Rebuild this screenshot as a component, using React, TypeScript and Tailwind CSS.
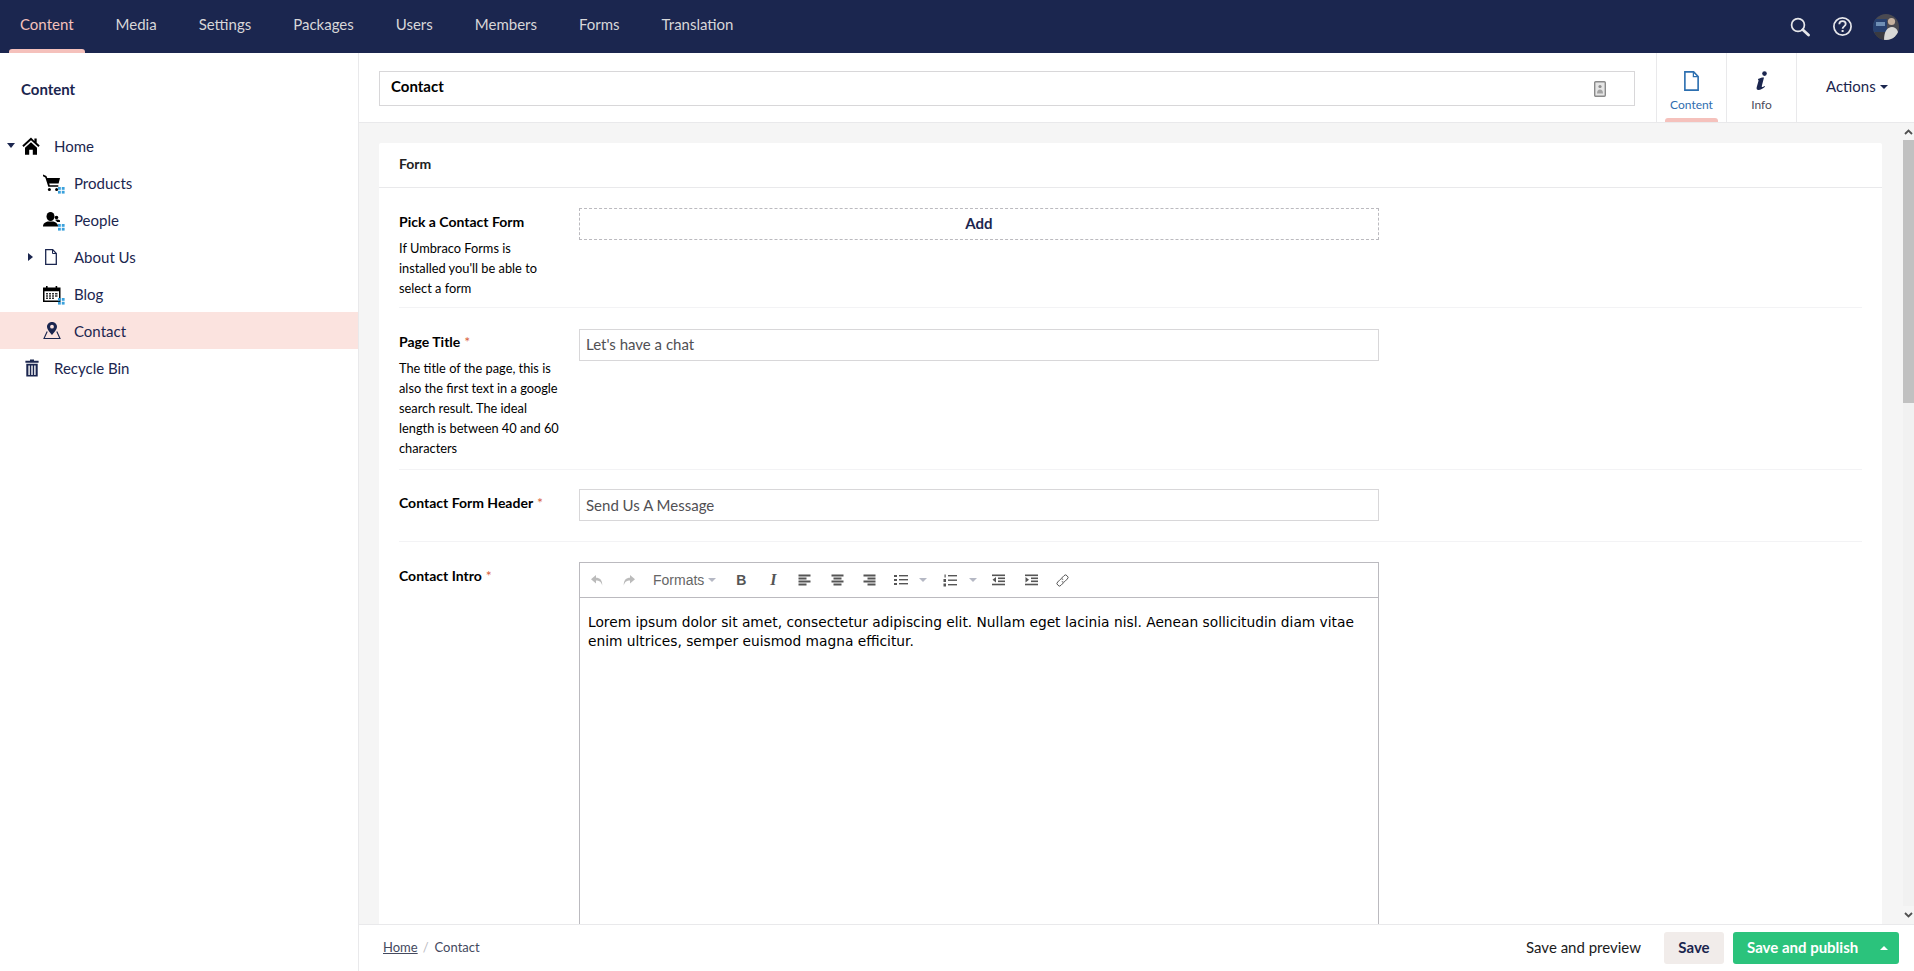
import React from "react";

const lato = "font-['Lato',sans-serif]";

function Dots() {
  return (
    <svg className="absolute left-[16px] top-[13px]" width="7" height="7" viewBox="0 0 7 7">
      <g fill="#3aa1dc">
        <rect x="0" y="0" width="2.800" height="2.800" />
        <rect x="3.800" y="0" width="2.800" height="2.800" />
        <rect x="0" y="3.800" width="2.800" height="2.800" />
        <rect x="3.800" y="3.800" width="2.800" height="2.800" />
      </g>
    </svg>
  );
}

function HomeIcon() {
  return (
    <svg width="18" height="18" viewBox="0 0 18 18">
      <path d="M9 .5.3 8.600l1.300 1.400L9 3.200l7.400 6.800 1.300-1.400-3-2.800V1.500h-2.300v2.400z" fill="#000" />
      <path d="M3 10.800 9 5.300l6 5.500v6.900h-4.200v-5H7.200v5H3z" fill="#000" />
    </svg>
  );
}
function CartIcon() {
  return (
    <svg width="17" height="18" viewBox="0 0 17 18">
      <path d="M0 .5 3.400 2l.8 2H17l-1.400 5.600H6.200l.5 1.600h8.600v1.600H5.300L2.300 3.400 0 2.200z" fill="#000" />
      <circle cx="6.400" cy="15.400" r="1.500" fill="#000" />
      <circle cx="13.600" cy="15.400" r="1.500" fill="#000" />
    </svg>
  );
}
function PeopleIcon() {
  return (
    <svg width="18" height="18" viewBox="0 0 18 18">
      <ellipse cx="7.500" cy="5.500" rx="4" ry="4.500" fill="#000" />
      <path d="M0 14.500c.5-2.600 3-3.600 4.500-4h6c1.600.5 4 1.500 4.500 4v1H0z" fill="#000" />
      <circle cx="13.500" cy="6.500" r="1.800" fill="#000" />
      <path d="M13 8.500c2 0 3.500.4 4 1v1.400h-3c-.3-.8-1-1.400-2-1.800z" fill="#000" />
    </svg>
  );
}
function DocIcon({ color = "#1b264f", w = 12, h = 16 }: { color?: string; w?: number; h?: number }) {
  return (
    <svg width={w} height={h} viewBox="0 0 12 16">
      <path d="M.7.7h7l3.600 3.700v10.900H.7z" fill="none" stroke={color} strokeWidth="1.300" />
      <path d="M7.500.9v3.600h3.600" fill="none" stroke={color} strokeWidth="1" />
    </svg>
  );
}
function CalendarIcon() {
  return (
    <svg width="18" height="18" viewBox="0 0 18 18">
      <path d="M0 2.500h3V1h1.600v1.500h8V1h1.600v1.500H17.500V17H0zM1.500 6.200v9.300H16V6.200z" fill="#000" fillRule="evenodd" />
      <path d="M3 8h11.500v1.400H3zM3 10.300h11.500v1.400H3zM3 12.600h8v1.400H3z" fill="#333" />
      <path d="M5 7.500h1v7H5zM8 7.500h1v7H8zM11 7.500h1v7h-1z" fill="#fff" />
    </svg>
  );
}
function MapIcon() {
  return (
    <svg width="18" height="18" viewBox="0 0 18 18">
      <path d="M9 0C6 0 4 2.200 4 4.800 4 7.600 7.400 11 9 13c1.600-2 5-5.400 5-8.200C14 2.200 12 0 9 0zm0 6.600A1.900 1.900 0 1 1 9 2.800a1.900 1.900 0 0 1 0 3.800z" fill="#1b264f" />
      <path d="M4.200 9.500 1 16.500h16l-3.200-7" fill="none" stroke="#1b264f" strokeWidth="1.100" />
    </svg>
  );
}
function TrashIcon() {
  return (
    <svg width="14" height="18" viewBox="0 0 14 18">
      <path d="M5 .5h4v1.200h4.600v2.100H.4V1.700H5z" fill="#1b264f" />
      <path d="M1.300 4.800h11.400V17.500H1.300zM3.400 6.500v9.400h1.400V6.500zM6.300 6.500v9.400h1.400V6.500zM9.200 6.500v9.400h1.400V6.500z" fill="#1b264f" fillRule="evenodd" />
    </svg>
  );
}

function TreeRow({
  depth,
  label,
  icon,
  caret,
  dots,
  active,
  iconClass = "",
}: {
  depth: 0 | 1;
  label: string;
  icon: React.ReactNode;
  caret?: "down" | "right";
  dots?: boolean;
  active?: boolean;
  iconClass?: string;
}) {
  return (
    <div className={`relative flex h-[37px] items-center ${depth === 0 ? "pl-[22px]" : "pl-[42px]"} ${active ? "bg-[#fbe3df]" : ""}`}>
      {caret === "down" && (
        <span className="absolute left-[7px] top-[16px] h-0 w-0 border-x-[4px] border-t-[5px] border-x-transparent border-t-[#1b264f]" />
      )}
      {caret === "right" && (
        <span className="absolute left-[28px] top-[15px] h-0 w-0 border-y-[4px] border-l-[5px] border-y-transparent border-l-[#1b264f]" />
      )}
      <span className={`relative flex h-[18px] w-[32px] shrink-0 items-center justify-start ${iconClass}`}>
        {icon}
        {dots && <Dots />}
      </span>
      <span className="pt-[1px] text-[15px] text-[#1b264f]">{label}</span>
    </div>
  );
}

function NavItem({ label, active }: { label: string; active?: boolean }) {
  return (
    <div className={`relative flex h-full items-center pb-[5px] ${active ? "pl-[20px] pr-[21px] text-[#f5c1bc]" : "px-[21px] text-[#d8d7d9]"} text-[15px]`}>
      {label}
      {active && <span className="absolute bottom-0 left-[9px] right-[10px] h-[4px] rounded-t-[3px] bg-[#f5c1bc]" />}
    </div>
  );
}

function Field({
  label,
  required,
  desc,
  children,
  className,
  labelClass,
  last,
}: {
  label: string;
  required?: boolean;
  desc?: string[];
  children: React.ReactNode;
  className: string;
  labelClass: string;
  last?: boolean;
}) {
  return (
    <div className={`flex ${last ? "" : "border-b border-[#f3f3f5]"} ${className}`}>
      <div className={`w-[180px] shrink-0 whitespace-nowrap ${labelClass}`}>
        <div className="text-[14px] font-bold leading-[20px] text-[#000]">
          {label}
          {required && <span className="ml-[4px] font-normal text-[#d9633f]">*</span>}
        </div>
        {desc && (
          <div className="mt-[6px] text-[12.8px] leading-[20px] text-[#000]">
            {desc.map((d) => (
              <div key={d}>{d}</div>
            ))}
          </div>
        )}
      </div>
      <div className="w-[800px] shrink-0">{children}</div>
    </div>
  );
}

const Tb = ({ children, className = "" }: { children: React.ReactNode; className?: string }) => (
  <span className={`flex items-center justify-center ${className}`}>{children}</span>
);

function Bars({ kind }: { kind: "l" | "c" | "r" }) {
  const rows = [0, 3, 6, 9];
  const widths = [12, 8, 12, 8];
  return (
    <svg width="13" height="12" viewBox="0 0 13 12">
      {rows.map((y, i) => {
        const w = widths[i];
        const x = kind === "l" ? 0.5 : kind === "r" ? 12.5 - w : 6.5 - w / 2;
        return <rect key={y} x={x} y={y + 0.5} width={w} height={2} fill="#555" />;
      })}
    </svg>
  );
}

function SmallCaret({ className = "" }: { className?: string }) {
  return <span className={`block h-0 w-0 border-x-[4px] border-t-[4px] border-x-transparent border-t-[#b5b8c4] ${className}`} />;
}

function Toolbar() {
  return (
    <div className="flex h-[35px] items-center border-b border-[#bbbabf] pl-[11px]">
      <Tb className="w-[12px]">
        <svg width="12" height="11" viewBox="0 0 12 11"><path d="M5 0 0 4.200 5 8.400V5.600c3 0 5 1 6.200 4.800C11.500 5.200 8.800 2.800 5 2.800z" fill="#bbb" /></svg>
      </Tb>
      <Tb className="ml-[20px] w-[12px]">
        <svg width="12" height="11" viewBox="0 0 12 11"><path d="M7 0l5 4.200L7 8.400V5.600c-3 0-5 1-6.200 4.800C.5 5.200 3.200 2.800 7 2.800z" fill="#bbb" /></svg>
      </Tb>
      <span className="ml-[18px] font-['Liberation_Sans',sans-serif] text-[14px] text-[#666]">Formats</span>
      <SmallCaret className="ml-[4px]" />
      <Tb className="ml-[19px] w-[12px]"><span className="font-['Liberation_Sans',sans-serif] text-[14px] font-bold text-[#555]">B</span></Tb>
      <Tb className="ml-[20px] w-[12px]"><span className="font-['Liberation_Serif',serif] text-[16px] font-bold italic text-[#555]">I</span></Tb>
      <Tb className="ml-[18px] w-[14px]"><Bars kind="l" /></Tb>
      <Tb className="ml-[19px] w-[14px]"><Bars kind="c" /></Tb>
      <Tb className="ml-[18px] w-[14px]"><Bars kind="r" /></Tb>
      <Tb className="ml-[18px] w-[14px]">
        <svg width="14" height="12" viewBox="0 0 14 12">
          <g fill="#555">
            <rect x="0" y="1" width="3" height="2" /><rect x="0" y="5" width="3" height="2" /><rect x="0" y="9" width="3" height="2" />
            <rect x="5" y="1" width="9" height="1.400" /><rect x="5" y="5" width="9" height="1.400" /><rect x="5" y="9" width="9" height="1.400" />
          </g>
        </svg>
      </Tb>
      <SmallCaret className="ml-[11px]" />
      <Tb className="ml-[16px] w-[14px]">
        <svg width="14" height="13" viewBox="0 0 14 13">
          <g fill="#555">
            <rect x="1.500" y="0.500" width="1.200" height="3" /><rect x="0.500" y="5" width="2.500" height="3" /><rect x="0.500" y="9.500" width="2.500" height="3" />
            <rect x="5" y="1" width="9" height="1.400" /><rect x="5" y="5.500" width="9" height="1.400" /><rect x="5" y="10" width="9" height="1.400" />
          </g>
        </svg>
      </Tb>
      <SmallCaret className="ml-[12px]" />
      <Tb className="ml-[14px] w-[14px]">
        <svg width="13" height="12" viewBox="0 0 13 12">
          <g fill="#555">
            <rect x="0" y="0.500" width="13" height="1.600" /><rect x="6" y="3.500" width="7" height="1.600" /><rect x="6" y="6.500" width="7" height="1.600" /><rect x="0" y="9.700" width="13" height="1.600" />
            <path d="M4 3v5.500L.5 5.700z" />
          </g>
        </svg>
      </Tb>
      <Tb className="ml-[19px] w-[14px]">
        <svg width="13" height="12" viewBox="0 0 13 12">
          <g fill="#555">
            <rect x="0" y="0.500" width="13" height="1.600" /><rect x="6" y="3.500" width="7" height="1.600" /><rect x="6" y="6.500" width="7" height="1.600" /><rect x="0" y="9.700" width="13" height="1.600" />
            <path d="M.5 3v5.500L4 5.700z" />
          </g>
        </svg>
      </Tb>
      <Tb className="ml-[17px] w-[14px]">
        <svg width="13" height="13" viewBox="0 0 13 13" fill="none" stroke="#555" strokeWidth="1">
          <path d="M5.500 4.200 8 1.700a2 2 0 0 1 3 0l.3.3a2 2 0 0 1 0 3L8.800 7.500a2 2 0 0 1-3 0" />
          <path d="M7.500 8.800 5 11.300a2 2 0 0 1-3 0l-.3-.3a2 2 0 0 1 0-3l2.500-2.500a2 2 0 0 1 3 0" />
        </svg>
      </Tb>
    </div>
  );
}

export default function App() {
  return (
    <div className={`flex h-screen w-full flex-col overflow-hidden bg-white ${lato}`}>
      <header className="flex h-[53px] shrink-0 items-stretch bg-[#1b264f]">
        <nav className="flex h-full items-stretch">
          <NavItem label="Content" active />
          <NavItem label="Media" />
          <NavItem label="Settings" />
          <NavItem label="Packages" />
          <NavItem label="Users" />
          <NavItem label="Members" />
          <NavItem label="Forms" />
          <NavItem label="Translation" />
        </nav>
        <div className="ml-auto flex items-center pr-[15px]">
          <svg width="20" height="20" viewBox="0 0 20 20" fill="none">
            <circle cx="8" cy="8" r="6.400" stroke="#e6e6ea" strokeWidth="1.700" />
            <path d="M12.800 12.800 18.500 18" stroke="#e6e6ea" strokeWidth="2.800" strokeLinecap="round" />
          </svg>
          <svg className="ml-[23px]" width="19" height="19" viewBox="0 0 19 19" fill="none">
            <circle cx="9.500" cy="9.500" r="8.600" stroke="#e6e6ea" strokeWidth="1.700" />
            <path d="M6.300 7.300c0-2 1.500-3.100 3.300-3.100 1.700 0 3.100 1.100 3.100 2.700 0 2.400-3.100 2.500-3.100 4.900" stroke="#e6e6ea" strokeWidth="1.800" />
            <rect x="8.600" y="13" width="2" height="2" fill="#e6e6ea" />
          </svg>
          <svg className="ml-[21px]" width="26" height="26" viewBox="0 0 26 26">
            <defs>
              <clipPath id="av"><circle cx="13" cy="13" r="13" /></clipPath>
            </defs>
            <g clipPath="url(#av)">
              <rect width="26" height="26" fill="#4a4a52" />
              <rect y="5" width="14" height="13" fill="#27406f" />
              <rect x="3" y="8" width="9" height="4" fill="#6f8fb5" />
              <rect x="2" y="18" width="12" height="8" fill="#3a3a40" />
              <circle cx="18.500" cy="7.500" r="3.600" fill="#c7b2a0" />
              <path d="M11 26c0-8 3-13 8-13s7 5 7 13z" fill="#d8d8d6" />
            </g>
          </svg>
        </div>
      </header>

      <div className="flex min-h-0 flex-1">
        <aside className="w-[359px] shrink-0 border-r border-[#e9e9eb] bg-white">
          <div className="flex h-[73px] items-center pl-[21px] pb-[8px] pt-[7px] text-[15px] font-bold text-[#1b264f]">Content</div>
          <div className="pt-[1px]">
            <TreeRow depth={0} label="Home" caret="down" icon={<HomeIcon />} />
            <TreeRow depth={1} label="Products" dots icon={<CartIcon />} iconClass="pl-[1px]" />
            <TreeRow depth={1} label="People" dots icon={<PeopleIcon />} iconClass="pl-[1px]" />
            <TreeRow depth={1} label="About Us" caret="right" icon={<DocIcon />} iconClass="pl-[3px]" />
            <TreeRow depth={1} label="Blog" dots icon={<CalendarIcon />} iconClass="pl-[1px]" />
            <TreeRow depth={1} label="Contact" active icon={<MapIcon />} iconClass="pl-[1px]" />
            <TreeRow depth={0} label="Recycle Bin" icon={<TrashIcon />} iconClass="pl-[3px]" />
          </div>
        </aside>

        <main className="flex min-w-0 flex-1 flex-col">
          <div className="flex h-[70px] shrink-0 items-stretch border-b border-[#e9e9eb]">
            <div className="flex flex-1 items-start pl-[20px] pr-[21px] pt-[18px]">
              <div className="flex h-[35px] flex-1 items-center border border-[#d8d7d9] pl-[11px] pr-[28px]">
                <span className="pb-[4px] text-[15px] font-bold text-[#000]">Contact</span>
                <svg className="ml-auto" width="12" height="16" viewBox="0 0 12 16">
                  <rect x="0.700" y="0.700" width="10.600" height="14.600" rx="1" fill="#e6e6e6" stroke="#8a8a8a" strokeWidth="1.400" />
                  <circle cx="6" cy="5.500" r="1.600" fill="#8f8f8f" />
                  <path d="M3 12.500c0-2.500 1.200-4 3-4s3 1.500 3 4z" fill="#a3a3a3" />
                </svg>
              </div>
            </div>
            <div className="relative flex w-[70px] flex-col items-center border-l border-[#e9e9eb] pt-[18px]">
              <DocIcon color="#2c6fb0" w={15} h={20} />
              <span className="mt-[6px] text-[12px] leading-[16px] text-[#2f6db0]">Content</span>
              <span className="absolute bottom-0 left-[8px] right-[8px] h-[4px] rounded-t-[3px] bg-[#f5c1bc]" />
            </div>
            <div className="flex w-[70px] flex-col items-center border-l border-[#e9e9eb] pt-[18px]">
              <svg width="14" height="20" viewBox="0 0 14 20">
                <circle cx="9.500" cy="2.600" r="2.300" fill="#1b264f" />
                <path d="M3 8c2-1 4.500-1.700 6-1.400L6.800 15c-.2.9.4 1.200 1 .9l1.800-1 .4.900C8 17.500 5.500 19 3.500 19 1.800 19 1.300 17.800 1.700 16.300L3.600 9.600l-.4-.5z" fill="#1b264f" />
              </svg>
              <span className="mt-[6px] text-[12px] leading-[16px] text-[#4c4c5c]">Info</span>
            </div>
            <div className="flex w-[118px] items-start border-l border-[#e9e9eb] pl-[29px] pt-[23px]">
              <span className="text-[15px] leading-[20px] text-[#1b264f]">Actions</span>
              <span className="ml-[4px] mt-[9px] h-0 w-0 border-x-[4px] border-t-[4px] border-x-transparent border-t-[#1b264f]" />
            </div>
          </div>

          <div className="flex min-h-0 flex-1">
            <div className="min-w-0 flex-1 overflow-hidden bg-[#f5f5f5] pb-0 pl-[20px] pr-[21px] pt-[20px]">
              <section className="rounded-[2px] bg-white">
                <div className="flex h-[45px] items-center border-b border-[#e9e9eb] pb-[3px] pl-[20px] text-[14px] font-bold text-[#222]">Form</div>
                <div className="px-[20px]">
                  <Field
                    className="h-[120px] pt-[20px]"
                    labelClass="pt-[4px]"
                    label="Pick a Contact Form"
                    desc={["If Umbraco Forms is", "installed you'll be able to", "select a form"]}
                  >
                    <div className="flex h-[32px] items-center justify-center border border-dashed border-[#bbbabf] pb-[1px] text-[15px] font-bold text-[#1b264f]">Add</div>
                  </Field>
                  <Field
                    className="h-[162px] pt-[21px]"
                    labelClass="pt-[3px]"
                    label="Page Title"
                    required
                    desc={["The title of the page, this is", "also the first text in a google", "search result. The ideal", "length is between 40 and 60", "characters"]}
                  >
                    <div className="flex h-[32px] items-center border border-[#d8d7d9] pb-[1px] pl-[6px] text-[15px] text-[#515054]">Let's have a chat</div>
                  </Field>
                  <Field className="h-[72px] pt-[19px]" labelClass="pt-[4px]" label="Contact Form Header" required>
                    <div className="flex h-[32px] items-center border border-[#d8d7d9] pl-[6px] text-[15px] text-[#515054]">Send Us A Message</div>
                  </Field>
                  <Field className="pt-[20px]" labelClass="pt-[4px]" label="Contact Intro" required last>
                    <div className="h-[500px] border border-[#bbbabf]">
                      <Toolbar />
                      <div className="px-[8px] pt-[15px] font-['DejaVu_Sans',sans-serif] text-[13.77px] leading-[18.5px] text-[#000]">
                        <div>Lorem ipsum dolor sit amet, consectetur adipiscing elit. Nullam eget lacinia nisl. Aenean sollicitudin diam vitae</div>
                        <div>enim ultrices, semper euismod magna efficitur.</div>
                      </div>
                    </div>
                  </Field>
                </div>
              </section>
            </div>
            <div className="flex w-[11px] shrink-0 flex-col bg-[#f1f1f1]">
              <div className="flex h-[17px] items-center justify-center bg-[#f5f5f5]">
                <svg width="9" height="6" viewBox="0 0 9 6"><path d="M1 5l3.500-3.500L8 5" fill="none" stroke="#505050" strokeWidth="1.800" /></svg>
              </div>
              <div className="h-[263px] bg-[#c1c1c1]" />
              <div className="flex-1" />
              <div className="flex h-[18px] items-center justify-center bg-[#f5f5f5]">
                <svg width="9" height="6" viewBox="0 0 9 6"><path d="M1 1l3.500 3.500L8 1" fill="none" stroke="#505050" strokeWidth="1.800" /></svg>
              </div>
            </div>
          </div>

          <footer className="flex h-[47px] shrink-0 items-center border-t border-[#e9e9eb] bg-white pl-[24px] pr-[15px]">
            <span className="text-[13px] text-[#44495e] underline">Home</span>
            <span className="ml-[5px] mr-[6px] text-[13px] text-[#bbbabf]">/</span>
            <span className="text-[13px] text-[#44495e]">Contact</span>
            <span className="ml-auto pb-[1px] text-[15px] text-[#1b1b1b]">Save and preview</span>
            <span className="ml-[23px] flex h-[32px] w-[60px] items-center justify-center rounded-[3px] bg-[#f1ecea] pb-[1px] text-[15px] font-bold text-[#1b264f]">Save</span>
            <span className="ml-[9px] flex h-[32px] w-[166px] items-center rounded-[3px] bg-[#2bc37c] pb-[1px] pl-[14px] text-[15px] font-bold text-white">
              Save and publish
              <span className="ml-auto mr-[11px] h-0 w-0 border-x-[4px] border-b-[4px] border-x-transparent border-b-white" />
            </span>
          </footer>
        </main>
      </div>
    </div>
  );
}
